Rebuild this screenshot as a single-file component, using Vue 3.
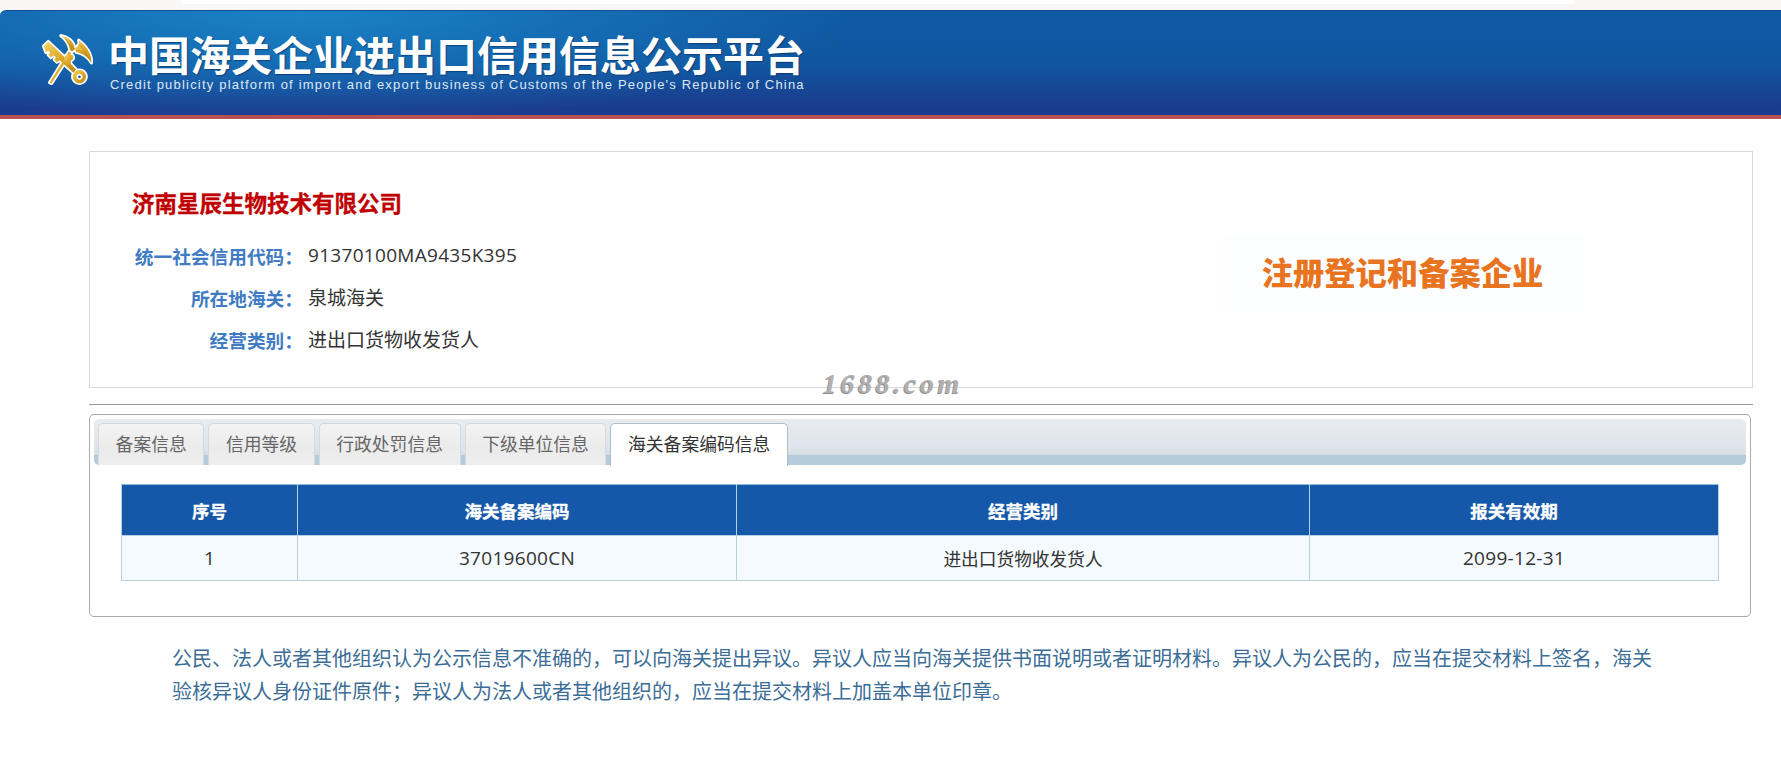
<script setup>
const rows = [
  { label: "统一社会信用代码：", value: "91370100MA9435K395", code: true },
  { label: "所在地海关：", value: "泉城海关" },
  { label: "经营类别：", value: "进出口货物收发货人" },
];

const tabs = ["备案信息", "信用等级", "行政处罚信息", "下级单位信息", "海关备案编码信息"];
const activeTab = 4;

const columns = ["序号", "海关备案编码", "经营类别", "报关有效期"];
const records = [["1", "37019600CN", "进出口货物收发货人", "2099-12-31"]];

const isLatin = (text) => /^[\x00-\x7f]+$/.test(text);
</script>

<template>
  <div class="page">
    <div class="topEdge"><div class="topEdgeBox"></div></div>
    <header class="banner">
      <svg class="logo" viewBox="60 40 170 160" aria-hidden="true">
        <defs>
          <linearGradient id="gold" x1="0" y1="0" x2="1" y2="1">
            <stop offset="0" stop-color="#f3d568" />
            <stop offset="0.55" stop-color="#d9a726" />
            <stop offset="1" stop-color="#b9861a" />
          </linearGradient>
          <g id="emblem">
            <path d="M70 80L84 66L128 108L168 150L160 160L118 122L110 128L102 120L107 114L100 107L92 114L84 106L90 100L84 93L77 99Z" />
            <path d="M178 152A20 20 0 1 1 177.900 152ZM178 163A9 9 0 1 0 178.100 163Z" fill-rule="evenodd" />
            <path d="M88 190L146 96L153 100L94 192Z" />
            <path d="M150 92C146 72 136 58 122 48C144 52 162 66 164 88L156 96Z" />
            <path d="M164 86C172 82 180 74 176 62C198 78 216 104 214 130C204 112 188 102 168 98Z" />
            <path d="M136 128C126 116 136 104 148 104C160 104 164 116 154 122C148 126 156 134 148 142C142 146 138 136 136 128Z" />
          </g>
        </defs>
        <use href="#emblem" fill="#fff" stroke="#fff" stroke-width="10" stroke-linejoin="round" />
        <use href="#emblem" fill="url(#gold)" />
        <path d="M178 74C190 88 200 104 206 118M168 92C180 92 192 100 200 110M136 60C146 68 152 78 156 88" fill="none" stroke="#a8791a" stroke-width="1.500" />
      </svg>
      <div class="bannerText">
        <div class="bannerTitle">中国海关企业进出口信用信息公示平台</div>
        <div class="bannerSub">Credit publicity platform of import and export business of Customs of the People's Republic of China</div>
      </div>
    </header>

    <section class="infoCard">
      <div class="infoLeft">
        <h1 class="company">济南星辰生物技术有限公司</h1>
        <div v-for="row in rows" :key="row.label" class="infoRow">
          <span class="infoLabel">{{ row.label }}</span>
          <span class="infoValue" :class="{ code: row.code }">{{ row.value }}</span>
        </div>
      </div>
      <div class="badge">注册登记和备案企业</div>
    </section>

    <div class="divider">
      <span class="watermark">1688.com</span>
    </div>

    <section class="panel">
      <div class="tabStrip">
        <div v-for="(tab, i) in tabs" :key="tab" class="tab" :class="{ active: i === activeTab }">{{ tab }}</div>
      </div>
      <table class="records">
        <colgroup>
          <col class="c1" />
          <col class="c2" />
          <col class="c3" />
          <col class="c4" />
        </colgroup>
        <thead>
          <tr>
            <th v-for="col in columns" :key="col">{{ col }}</th>
          </tr>
        </thead>
        <tbody>
          <tr v-for="rec in records" :key="rec[0]">
            <td v-for="cell in rec" :key="cell" :class="{ latin: isLatin(cell) }">{{ cell }}</td>
          </tr>
        </tbody>
      </table>
    </section>

    <p class="notice">公民、法人或者其他组织认为公示信息不准确的，可以向海关提出异议。异议人应当向海关提供书面说明或者证明材料。异议人为公民的，应当在提交材料上签名，海关验核异议人身份证件原件；异议人为法人或者其他组织的，应当在提交材料上加盖本单位印章。</p>
  </div>
</template>

<style scoped>
.page {
  width: 1781px;
  height: 767px;
  overflow: hidden;
  background: #fff;
  font-family: "Open Sans", "Noto Sans CJK SC", sans-serif;
  color: #333;
}

.topEdge {
  height: 10px;
  background: #f9f7f6;
  padding: 0 206px 0 180px;
  box-sizing: border-box;
}

.topEdgeBox {
  height: 4px;
  background: #fff;
  border-radius: 0 0 8px 8px;
}

.banner {
  height: 109px;
  box-sizing: border-box;
  border-top: 1px solid #1a4a90;
  border-bottom: 4px solid #b85054;
  border-top-left-radius: 6px;
  background: radial-gradient(ellipse 560px 110px at 300px 0, #1b82c6 0%, rgba(27, 130, 198, 0) 100%),
    linear-gradient(180deg, #0f5aa4 0%, #10569f 50%, #1b3c8e 92%, #1b3c8e 100%);
  display: flex;
  align-items: flex-start;
  padding: 20px 0 0 40px;
}

.logo {
  width: 57px;
  height: 53px;
  margin: 2px 13px 0 0;
}

.bannerText {
  width: 695px;
}

.bannerTitle {
  margin-left: -2px;
  font-size: 41px;
  line-height: 44px;
  font-weight: 700;
  color: #fff;
  white-space: nowrap;
  font-family: "Noto Sans CJK SC", sans-serif;
  text-shadow: 1px 1px 1px rgba(10, 40, 90, 0.6);
}

.bannerSub {
  margin-top: 3px;
  font-family: "Liberation Sans", sans-serif;
  font-size: 13px;
  line-height: 14px;
  letter-spacing: 1.2px;
  color: #dce8f4;
  white-space: nowrap;
}

.infoCard {
  margin: 32px 28px 0 89px;
  height: 237px;
  box-sizing: border-box;
  border: 1px solid #d9d9d9;
  display: flex;
  justify-content: space-between;
  padding: 33px 0 0 42px;
}

.company {
  margin: 0 0 11px;
  font-size: 22.5px;
  line-height: 38px;
  font-weight: 700;
  color: #c00000;
  -webkit-text-stroke: 0.3px #c00000;
}

.infoRow {
  display: flex;
  height: 42px;
  align-items: center;
}

.infoLabel {
  width: 171px;
  text-align: right;
  font-size: 18.7px;
  font-weight: 700;
  color: #3f7cc4;
}

.infoValue {
  margin-left: 5px;
  font-size: 19px;
  color: #333;
}

.infoValue.code {
  letter-spacing: 0.3px;
}

.badge {
  width: 363px;
  height: 79px;
  margin: 50px 168px 0 0;
  background: #fdfeff;
  text-align: center;
  line-height: 73px;
  font-family: "Noto Sans CJK SC", sans-serif;
  font-size: 31.3px;
  font-weight: 900;
  color: #e8741f;
}

.divider {
  position: relative;
  margin: 16px 28px 0 89px;
  border-top: 1px solid #999;
  height: 9px;
}

.watermark {
  position: absolute;
  left: 734px;
  top: -37px;
  font-family: "Liberation Serif", serif;
  font-style: italic;
  font-weight: 700;
  font-size: 28px;
  letter-spacing: 3.6px;
  color: #b0b0b0;
  text-shadow: -1px 1px 0 #909090;
}

.panel {
  margin: 0 30px 0 89px;
  height: 203px;
  box-sizing: border-box;
  border: 1px solid #aaa;
  border-radius: 5px;
  padding: 4px 4px 0;
}

.tabStrip {
  height: 46px;
  box-sizing: border-box;
  display: flex;
  gap: 4px;
  align-items: flex-end;
  padding-left: 4px;
  border-radius: 5px;
  background: linear-gradient(180deg, #e8ecef 0%, #dde4ea 65%, #d5dde3 79%, #b3cbdb 79%, #b3cbdb 100%);
}

.tab {
  height: 42px;
  box-sizing: border-box;
  padding: 0 16.6px;
  border: 1px solid #d3dbe2;
  border-bottom: 0;
  border-radius: 5px 5px 0 0;
  background: linear-gradient(180deg, #f3f3f3 0%, #ebebeb 60%, #eeeeee 100%);
  font-size: 17.8px;
  line-height: 40px;
  color: #666;
  white-space: nowrap;
}

.tab.active {
  height: 43px;
  margin-bottom: -1px;
  background: #fff;
  border-color: #aebfce;
  color: #333;
}

.records {
  width: 1598px;
  margin: 19px 0 0 27px;
  border-collapse: collapse;
  table-layout: fixed;
}

.c1 {
  width: 176px;
}

.c2 {
  width: 439px;
}

.c3 {
  width: 573px;
}

.records th {
  height: 50px;
  padding: 0;
  font-size: 17.5px;
  background: #1557a8;
  color: #fff;
  font-weight: 700;
  -webkit-text-stroke: 0.3px #fff;
  border: 1px solid #b3d0e6;
  border-top-color: #8fbfe0;
}

.records td {
  height: 44px;
  padding: 0;
  font-size: 17.7px;
  background: #f4fafd;
  text-align: center;
  color: #333;
  border: 1px solid #b8d2e2;
}

.records td.latin {
  font-size: 19px;
  letter-spacing: 0.3px;
}

.notice {
  margin: 25px 0 0 172px;
  width: 1484px;
  font-size: 20px;
  line-height: 33px;
  color: #3c6d96;
}
</style>
